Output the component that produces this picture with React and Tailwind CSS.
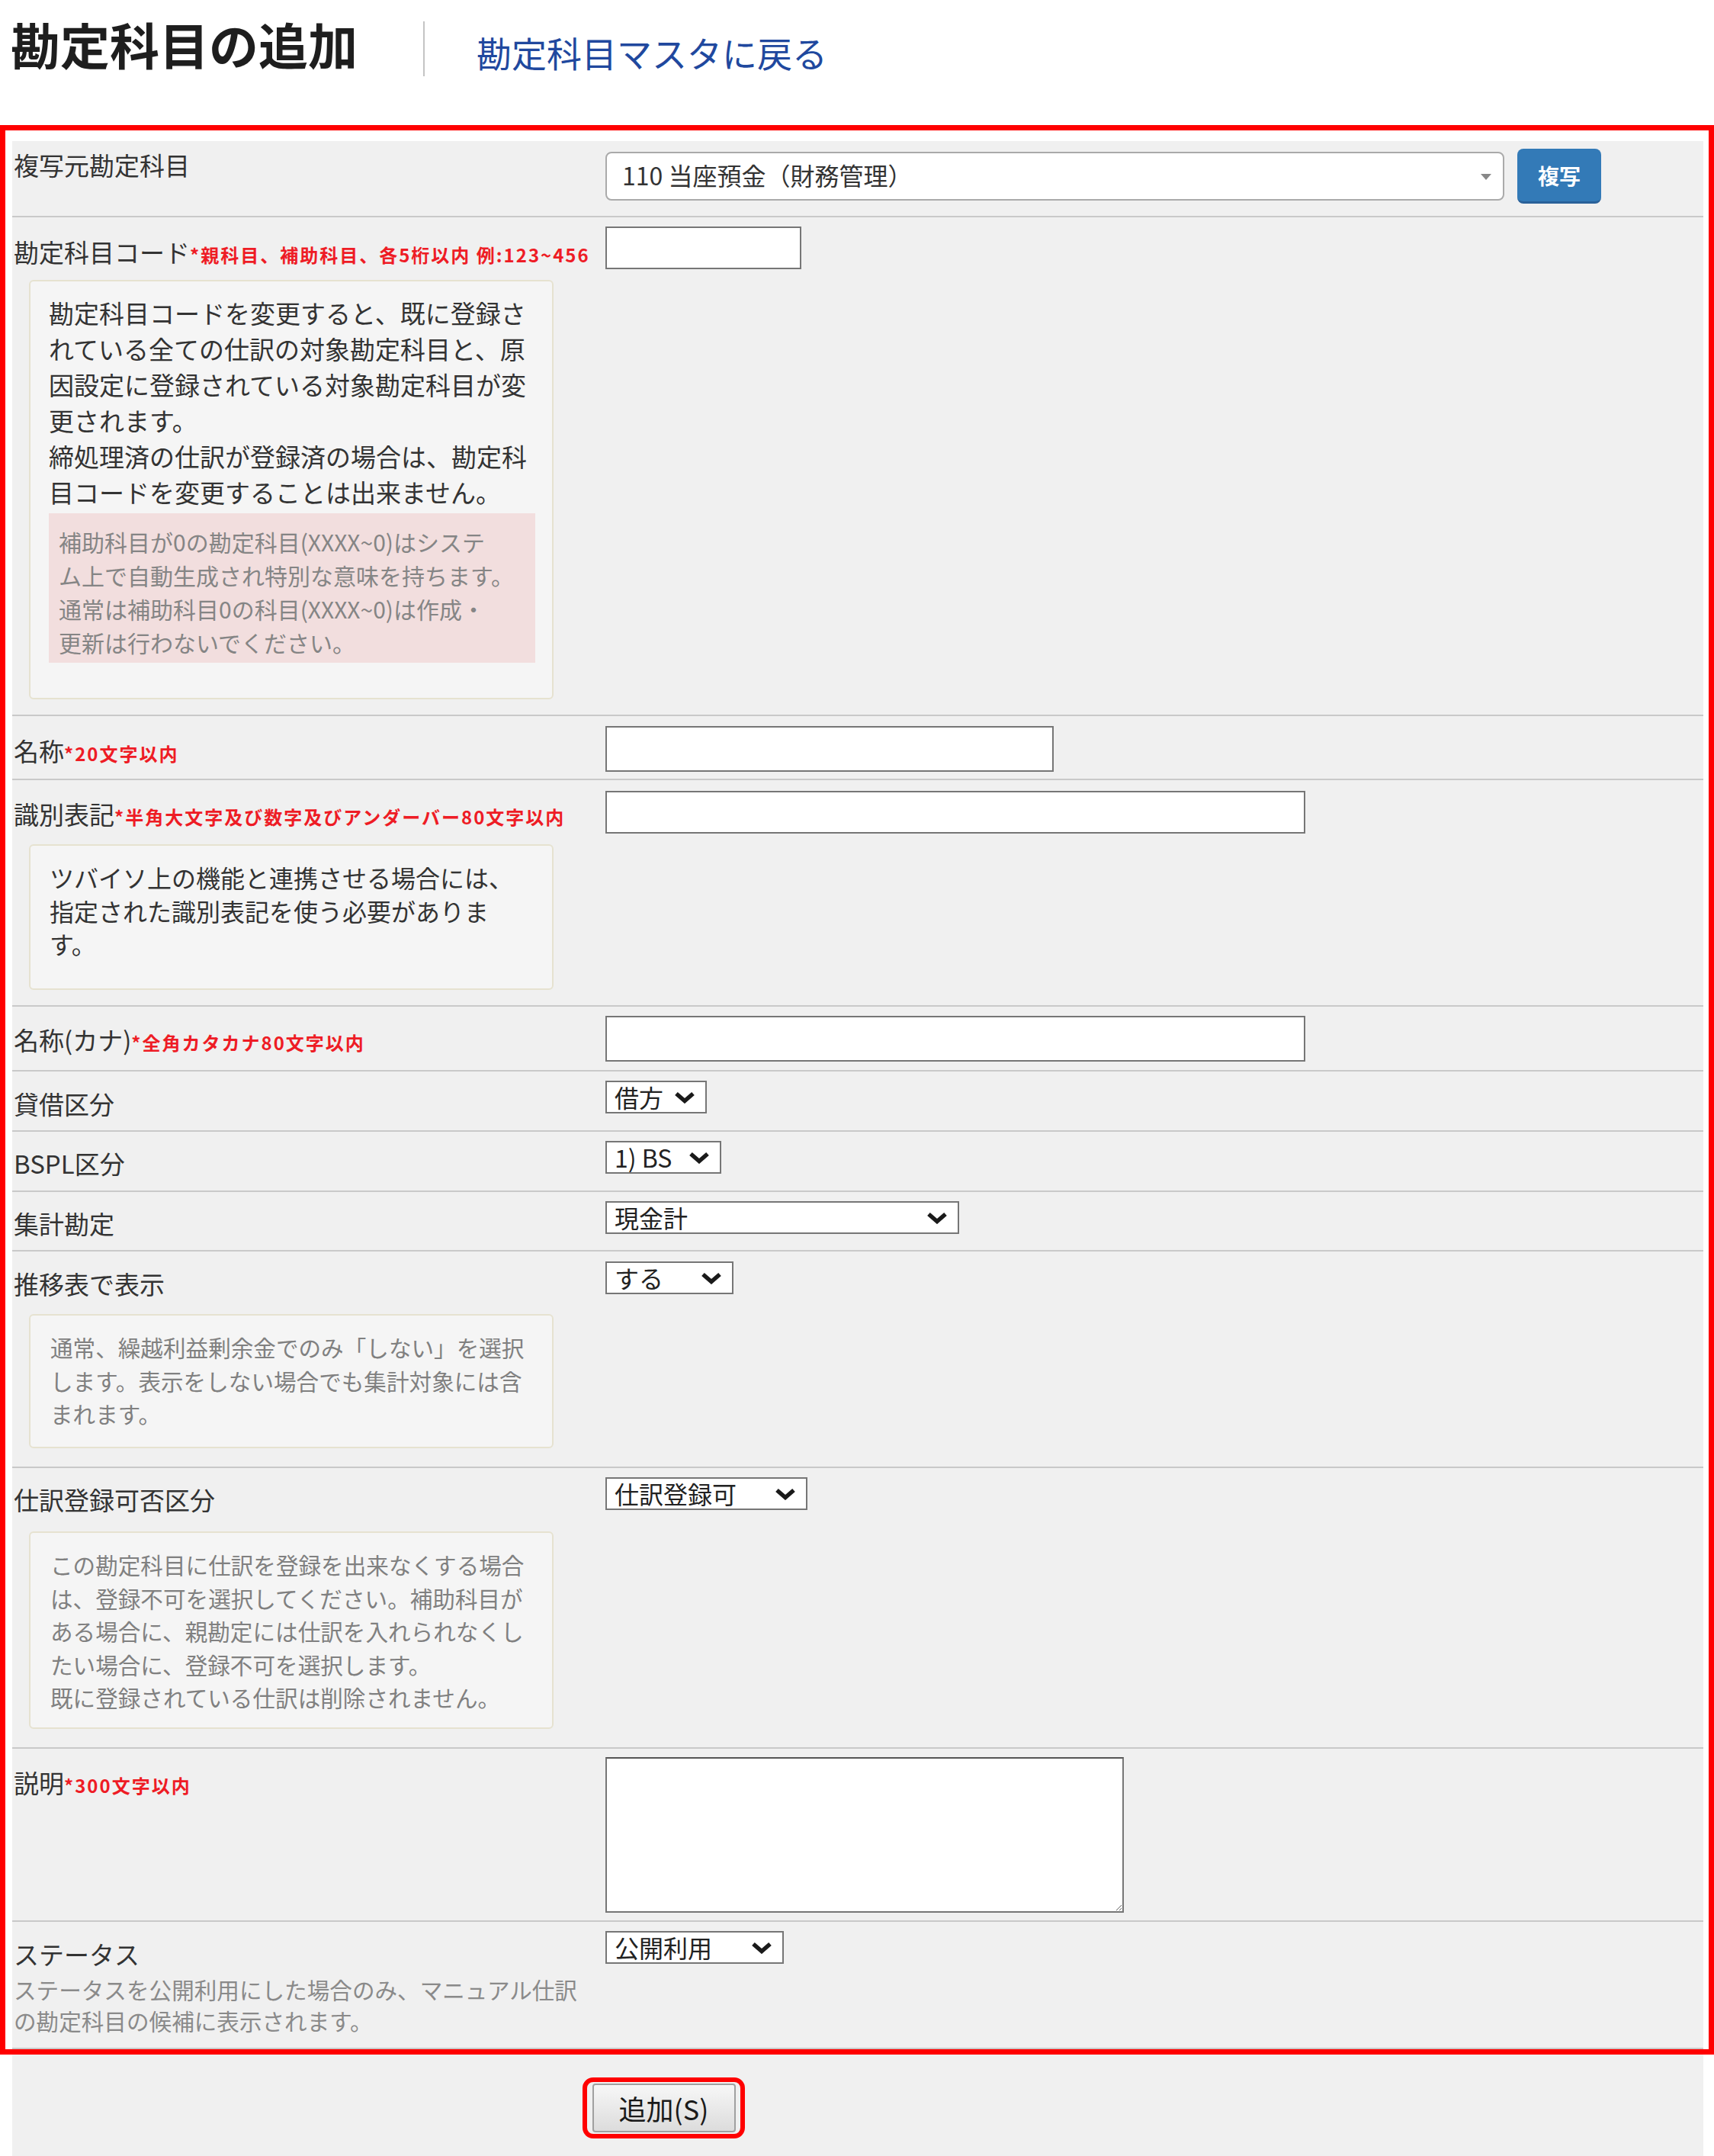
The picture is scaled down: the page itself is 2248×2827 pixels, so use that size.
import React from 'react';

const label = 'text-[33px] leading-[46px] text-[#333]';
const note = 'text-[24px] font-bold tracking-[2px] text-[#ee1c25]';
const field = 'block border-2 border-[#767676] bg-white outline-none';

function Chevron() {
  return (
    <svg
      viewBox="0 0 28 16"
      fill="none"
      className="pointer-events-none absolute right-[15px] top-1/2 h-[16px] w-[28px] -translate-y-1/2"
    >
      <path d="M3 3 L14 12.5 L25 3" stroke="#1a1a1a" strokeWidth="5.5" />
    </svg>
  );
}

function Dropdown({ value, className }) {
  return (
    <div className={`relative h-[43px] ${className}`}>
      <select
        defaultValue={value}
        className="h-full w-full appearance-none rounded-none border-2 border-[#767676] bg-white pl-[10px] text-[32px] leading-[39px] text-[#222] outline-none"
      >
        <option>{value}</option>
      </select>
      <Chevron />
    </div>
  );
}

function Row({ className, children }) {
  return <div className={`flex border-b-2 border-[#c9c9c9] ${className}`}>{children}</div>;
}

function Cell({ className, children }) {
  return <div className={`w-[778px] shrink-0 pl-[2px] ${className}`}>{children}</div>;
}

function Help({ className, children }) {
  return (
    <div className={`ml-[20px] w-[688px] rounded-[6px] border-2 border-[#e6e2d0] bg-[#f5f5f5] ${className}`}>
      {children}
    </div>
  );
}

export default function App() {
  return (
    <div className="w-full bg-white font-['Noto_Sans_CJK_JP','Noto_Sans',sans-serif]">
      {/* page header */}
      <div className="flex h-[164px] items-start">
        <h1 className="ml-[14px] mt-[25px] text-[65px] font-bold leading-[65px] text-[#1e1e1e]">勘定科目の追加</h1>
        <div className="ml-[86px] mt-[28px] h-[72px] w-[2px] bg-[#c4c4c4]" />
        <a href="#" className="ml-[68px] mt-[45px] text-[46px] leading-[46px] text-[#20489e]">
          勘定科目マスタに戻る
        </a>
      </div>

      {/* form table */}
      <div className="border-[7px] border-[#ff0000] pl-[9px] pr-[7px] pt-[14px]">
        <div className="bg-[#f0f0f0]">
          <Row className="h-[100px]">
            <Cell className="pt-[8px]">
              <div className={label}>複写元勘定科目</div>
            </Cell>
            <div className="flex items-center self-start pt-[10px]">
              <div className="relative flex h-[64px] w-[1179px] items-center rounded-[8px] border-2 border-[#aaaaaa] bg-white pb-[4px] pl-[20px] text-[32px] text-[#333]">
                110 当座預金（財務管理）
                <span className="absolute right-[15px] top-[27px] border-x-[7px] border-t-[8px] border-x-transparent border-t-[#888]" />
              </div>
              <button className="ml-[17px] h-[72px] w-[110px] rounded-[8px] border-b-[3px] border-[#2a6199] bg-[#337ab7] text-[28px] font-bold text-white">
                複写
              </button>
            </div>
          </Row>

          <Row className="h-[654px]">
            <Cell className="pt-[22px]">
              <div className="whitespace-nowrap">
                <span className={label}>勘定科目コード</span>
                <span className={note}>*親科目、補助科目、各5桁以内 例:123~456</span>
              </div>
              <Help className="mt-[14px] h-[550px] px-[24px] pt-[18px] text-[33px] leading-[47px] text-[#333]">
                勘定科目コードを変更すると、既に登録さ<br />
                れている全ての仕訳の対象勘定科目と、原<br />
                因設定に登録されている対象勘定科目が変<br />
                更されます。<br />
                締処理済の仕訳が登録済の場合は、勘定科<br />
                目コードを変更することは出来ません。
                <div className="mt-[4px] h-[196px] w-[638px] bg-[#f2dede] pl-[13px] pt-[15px] text-[30px] leading-[44px] text-[#858585]">
                  補助科目が0の勘定科目(XXXX~0)はシステ<br />
                  ム上で自動生成され特別な意味を持ちます。<br />
                  通常は補助科目0の科目(XXXX~0)は作成・<br />
                  更新は行わないでください。
                </div>
              </Help>
            </Cell>
            <div className="pt-[12px]">
              <input type="text" className={`${field} h-[56px] w-[257px]`} />
            </div>
          </Row>

          <Row className="h-[84px]">
            <Cell className="pt-[22px]">
              <div className="whitespace-nowrap">
                <span className={label}>名称</span>
                <span className={note}>*20文字以内</span>
              </div>
            </Cell>
            <div className="pt-[13px]">
              <input type="text" className={`${field} h-[60px] w-[588px]`} />
            </div>
          </Row>

          <Row className="h-[297px]">
            <Cell className="pt-[21px]">
              <div className="whitespace-nowrap">
                <span className={label}>識別表記</span>
                <span className={note}>*半角大文字及び数字及びアンダーバー80文字以内</span>
              </div>
              <Help className="mt-[17px] h-[191px] px-[25px] pt-[20px] text-[32px] leading-[43.5px] text-[#333]">
                ツバイソ上の機能と連携させる場合には、<br />
                指定された識別表記を使う必要がありま<br />
                す。
              </Help>
            </Cell>
            <div className="pt-[14px]">
              <input type="text" className={`${field} h-[56px] w-[918px]`} />
            </div>
          </Row>

          <Row className="h-[85px]">
            <Cell className="pt-[20px]">
              <div className="whitespace-nowrap">
                <span className={label}>名称(カナ)</span>
                <span className={note}>*全角カタカナ80文字以内</span>
              </div>
            </Cell>
            <div className="pt-[12px]">
              <input type="text" className={`${field} h-[60px] w-[918px]`} />
            </div>
          </Row>

          <Row className="h-[79px]">
            <Cell className="pt-[19px]">
              <div className={label}>貸借区分</div>
            </Cell>
            <div className="pt-[12px]">
              <Dropdown value="借方" className="w-[133px]" />
            </div>
          </Row>

          <Row className="h-[79px]">
            <Cell className="pt-[18px]">
              <div className={label}>BSPL区分</div>
            </Cell>
            <div className="pt-[12px]">
              <Dropdown value="1) BS" className="w-[152px]" />
            </div>
          </Row>

          <Row className="h-[78px]">
            <Cell className="pt-[18px]">
              <div className={label}>集計勘定</div>
            </Cell>
            <div className="pt-[12px]">
              <Dropdown value="現金計" className="w-[464px]" />
            </div>
          </Row>

          <Row className="h-[284px]">
            <Cell className="pt-[19px]">
              <div className={label}>推移表で表示</div>
              <Help className="mt-[17px] h-[176px] px-[26px] pt-[20px] text-[29.6px] leading-[43.5px] text-[#808080]">
                通常、繰越利益剰余金でのみ「しない」を選択<br />
                します。表示をしない場合でも集計対象には含<br />
                まれます。
              </Help>
            </Cell>
            <div className="pt-[13px]">
              <Dropdown value="する" className="w-[168px]" />
            </div>
          </Row>

          <Row className="h-[368px]">
            <Cell className="pt-[18px]">
              <div className={label}>仕訳登録可否区分</div>
              <Help className="mt-[19px] h-[259px] px-[26px] pt-[20px] text-[29.6px] leading-[43.5px] text-[#808080]">
                この勘定科目に仕訳を登録を出来なくする場合<br />
                は、登録不可を選択してください。補助科目が<br />
                ある場合に、親勘定には仕訳を入れられなくし<br />
                たい場合に、登録不可を選択します。<br />
                既に登録されている仕訳は削除されません。
              </Help>
            </Cell>
            <div className="pt-[12px]">
              <Dropdown value="仕訳登録可" className="w-[265px]" />
            </div>
          </Row>

          <Row className="h-[227px]">
            <Cell className="pt-[21px]">
              <div className="whitespace-nowrap">
                <span className={label}>説明</span>
                <span className={note}>*300文字以内</span>
              </div>
            </Cell>
            <div className="pt-[11px]">
              <textarea className={`${field} h-[204px] w-[680px] resize border-t-[#555]`} />
            </div>
          </Row>

          <Row className="h-[167px]">
            <Cell className="pt-[19px]">
              <div className={label}>ステータス</div>
              <div className="mt-[3px] text-[29.6px] leading-[41px] text-[#8a8a8a]">
                ステータスを公開利用にした場合のみ、マニュアル仕訳<br />
                の勘定科目の候補に表示されます。
              </div>
            </Cell>
            <div className="pt-[12px]">
              <Dropdown value="公開利用" className="w-[234px]" />
            </div>
          </Row>
        </div>
      </div>

      {/* submit area */}
      <div className="ml-[16px] mr-[14px] h-[133px] bg-[#f0f0f0] pl-[748px] pt-[30px]">
        <div className="flex h-[80px] w-[213px] items-center justify-center rounded-[14px] border-[6px] border-[#ff0000]">
          <button className="h-[64px] w-[188px] rounded-[4px] border-2 border-[#a0a0a0] bg-gradient-to-b from-[#f7f7f7] to-[#dcdcdc] text-[36px] text-[#1a1a1a]">
            追加(S)
          </button>
        </div>
      </div>
    </div>
  );
}
